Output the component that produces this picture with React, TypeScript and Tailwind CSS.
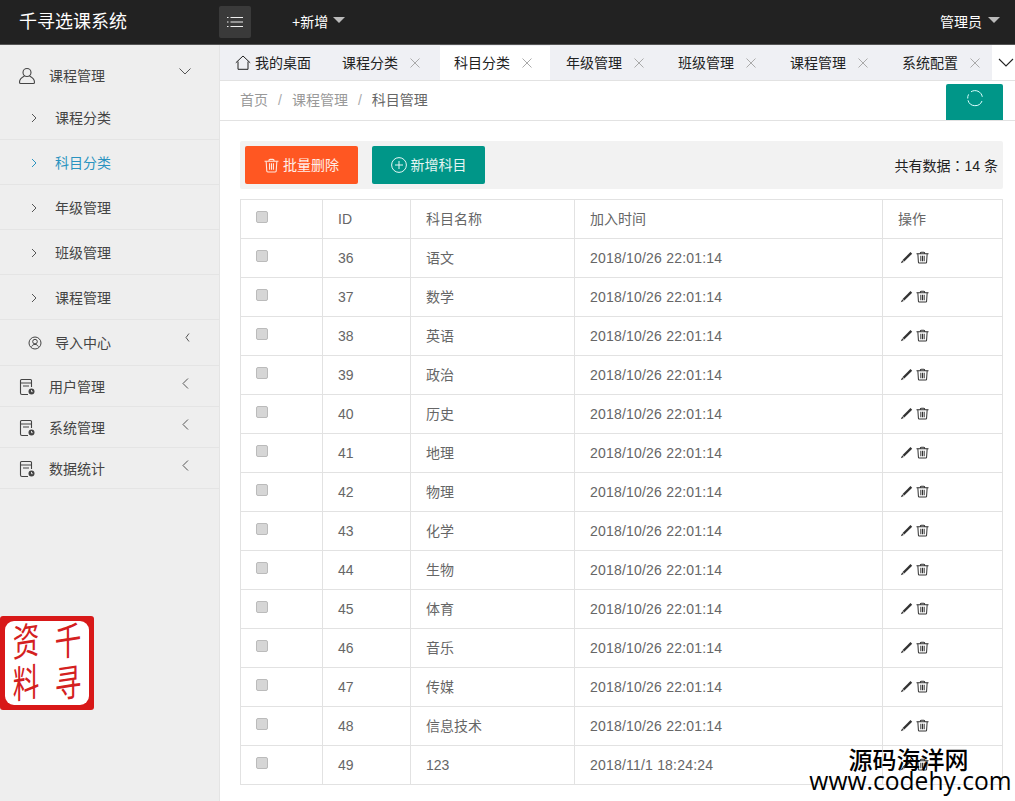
import type { ReactNode } from 'react'

const rows = [
  { id: '36', name: '语文', time: '2018/10/26 22:01:14' },
  { id: '37', name: '数学', time: '2018/10/26 22:01:14' },
  { id: '38', name: '英语', time: '2018/10/26 22:01:14' },
  { id: '39', name: '政治', time: '2018/10/26 22:01:14' },
  { id: '40', name: '历史', time: '2018/10/26 22:01:14' },
  { id: '41', name: '地理', time: '2018/10/26 22:01:14' },
  { id: '42', name: '物理', time: '2018/10/26 22:01:14' },
  { id: '43', name: '化学', time: '2018/10/26 22:01:14' },
  { id: '44', name: '生物', time: '2018/10/26 22:01:14' },
  { id: '45', name: '体育', time: '2018/10/26 22:01:14' },
  { id: '46', name: '音乐', time: '2018/10/26 22:01:14' },
  { id: '47', name: '传媒', time: '2018/10/26 22:01:14' },
  { id: '48', name: '信息技术', time: '2018/10/26 22:01:14' },
  { id: '49', name: '123', time: '2018/11/1 18:24:24' },
]

const subItems = ['课程分类', '科目分类', '年级管理', '班级管理', '课程管理']
const tabs = ['课程分类', '科目分类', '年级管理', '班级管理', '课程管理', '系统配置']

function UserIcon() {
  return (
    <svg width="18" height="18" viewBox="0 0 18 18" fill="none" stroke="#444" strokeWidth="1.1">
      <circle cx="9" cy="5.5" r="4" />
      <path d="M6.5 9C3.5 10.5 1.5 12.5 1.5 15.2c0 .8.4 1.3 1.2 1.3h12.6c.8 0 1.2-.5 1.2-1.3 0-2.7-2-4.7-5-6.2" />
    </svg>
  )
}

function CircleUserIcon() {
  return (
    <svg width="14" height="14" viewBox="0 0 14 14" fill="none" stroke="#444" strokeWidth="1">
      <circle cx="7" cy="7" r="6" />
      <circle cx="7" cy="5.6" r="2.3" />
      <path d="M3.6 10.6c.8-1.6 2-2.2 3.4-2.2s2.6.6 3.4 2.2" />
    </svg>
  )
}

function NoteIcon() {
  return (
    <svg width="17" height="18" viewBox="0 0 17 18" fill="none" stroke="#444" strokeWidth="1.1">
      <path d="M9 16.500H3c-1 0-1.500-.6-1.500-1.500V2.500c0-.6.4-1 1-1h9c.6 0 1 .4 1 1V9" />
      <path d="M1.500 5h11M4 8h6" />
      <circle cx="12.500" cy="13.500" r="3" fill="#444" stroke="none" />
      <path d="M12.500 12v1.700h1.200" stroke="#eee" strokeWidth="0.9" />
    </svg>
  )
}

function ChevronRight({ color = '#555' }: { color?: string }) {
  return (
    <svg width="6" height="10" viewBox="0 0 6 10" fill="none" stroke={color} strokeWidth="1">
      <path d="M1 1l4 4-4 4" />
    </svg>
  )
}

function ChevronLeft({ size = 'sm' }: { size?: 'sm' | 'lg' }) {
  const w = size === 'lg' ? 7 : 5
  const h = size === 'lg' ? 11 : 9
  return (
    <svg width={w} height={h} viewBox={`0 0 ${w} ${h}`} fill="none" stroke="#555" strokeWidth="1">
      <path d={`M${w - 1} .5L1 ${h / 2}l${w - 2} ${h / 2 - 0.5}`} />
    </svg>
  )
}

function CloseIcon() {
  return (
    <svg width="10" height="10" viewBox="0 0 10 10" fill="none" stroke="#aaa" strokeWidth="1">
      <path d="M.5.5l9 9M9.500.5l-9 9" />
    </svg>
  )
}

function TrashOutline({ size, color, width }: { size: number; color: string; width: number }) {
  return (
    <svg width={size} height={size} viewBox="0 0 14 14" fill="none" stroke={color} strokeWidth={width}>
      <path d="M.5 3h13M4.500 3c0-1 .5-1.700 1.200-1.700h2.600c.7 0 1.200.7 1.200 1.700" />
      <path d="M2 3l.6 9.200c0 .5.4.8 1 .8h6.800c.6 0 1-.3 1-.8L12 3" />
      <path d="M5.200 5v6M7 5v6M8.800 5v6" />
    </svg>
  )
}

function PencilIcon() {
  return (
    <svg width="13" height="13" viewBox="0 0 13 13" fill="#333">
      <path d="M10.500 1l1.700 1.700-7.900 7.900-1.700-1.700z" />
      <path d="M2.200 9.300l1.600 1.600-3 1.300z" />
    </svg>
  )
}

function SubRow({ label, active }: { label: string; active: boolean }) {
  return (
    <div className="flex h-[45px] items-center border-b border-[#e4e4e4] pl-[31px] pt-[2px]">
      <ChevronRight color={active ? '#2a93c0' : '#555'} />
      <span className={active ? 'ml-[18px] text-[#2a93c0]' : 'ml-[18px] text-[#444]'}>{label}</span>
    </div>
  )
}

function MainRow({ label }: { label: string }) {
  return (
    <div className="flex h-[41px] items-center border-b border-[#e4e4e4] pl-[19px] pr-[30px] pt-[2px]">
      <NoteIcon />
      <span className="ml-[13px] text-[#444]">{label}</span>
      <span className="ml-auto mb-[8px]">
        <ChevronLeft size="lg" />
      </span>
    </div>
  )
}

function Sidebar() {
  return (
    <aside className="w-[220px] shrink-0 border-r border-[#e4e4e4] bg-[#eeeeee] text-sm">
      <div className="flex h-[50px] items-center pl-[18px] pr-[28px] pt-[11px]">
        <UserIcon />
        <span className="ml-[13px] text-[#444]">课程管理</span>
        <svg className="ml-auto mb-[8px]" width="12" height="7" viewBox="0 0 12 7" fill="none" stroke="#555" strokeWidth="1">
          <path d="M.5.5L6 6l5.500-5.500" />
        </svg>
      </div>
      {subItems.map((label, i) => (
        <SubRow key={i} label={label} active={i === 1} />
      ))}
      <div className="flex h-[46px] items-center border-b border-[#e4e4e4] pl-[28px] pr-[29px]">
        <CircleUserIcon />
        <span className="ml-[13px] text-[#444]">导入中心</span>
        <span className="ml-auto mb-[10px]">
          <ChevronLeft />
        </span>
      </div>
      <MainRow label="用户管理" />
      <MainRow label="系统管理" />
      <MainRow label="数据统计" />
    </aside>
  )
}

function TabBar() {
  return (
    <div className="flex h-[36px] items-end border-b border-[#e2e2e2] bg-[#eff0f4] text-sm text-[#222]">
      <div className="flex min-w-0 flex-1 items-end overflow-hidden">
        <div className="flex h-[34px] w-[108px] shrink-0 items-center pl-[15px]">
          <svg width="16" height="16" viewBox="0 0 16 16" fill="none" stroke="#222" strokeWidth="1">
            <path d="M.8 7.800L8 1l7.200 6.800M3 6.500v7.800h10V6.500" />
          </svg>
          <span className="ml-[4px]">我的桌面</span>
        </div>
        {tabs.map((t, i) => (
          <div
            key={t}
            className={
              i === 1
                ? 'flex h-[34px] w-[110px] mr-[2px] shrink-0 items-center bg-white pl-[14px]'
                : 'flex h-[34px] w-[110px] mr-[2px] shrink-0 items-center pl-[14px]'
            }
          >
            <span>{t}</span>
            <span className="ml-[12px]">
              <CloseIcon />
            </span>
          </div>
        ))}
      </div>
      <div className="flex h-[35px] w-[23px] shrink-0 items-center justify-center bg-white">
        <svg className="ml-[5px]" width="16" height="9" viewBox="0 0 16 9" fill="none" stroke="#222" strokeWidth="1.100">
          <path d="M1 1l7 7 7-7" />
        </svg>
      </div>
    </div>
  )
}

function ToolButton({ color, icon, label }: { color: string; icon: ReactNode; label: string }) {
  return (
    <button className={`flex h-[38px] w-[113px] items-center justify-center gap-[4px] rounded-[2px] text-sm text-white/90 ${color}`}>
      {icon}
      {label}
    </button>
  )
}

function Cell({ children }: { children: ReactNode }) {
  return <td className="h-[39px] border border-[#e2e2e2] px-[15px] align-middle text-sm text-[#666]">{children}</td>
}

function Check() {
  return (
    <input
      type="checkbox"
      className="mb-[4px] block h-[12px] w-[12px] appearance-none rounded-[2px] border border-[#bbbbbb] bg-[#d6d6d6]"
    />
  )
}

function Seal() {
  return (
    <div className="absolute left-0 top-[616px] h-[94px] w-[94px] rounded-[3px] bg-[#d81818] p-[5px]">
      <div className="grid h-full w-full grid-cols-2 grid-rows-2 place-items-center rounded-[9px] bg-white text-[38px] leading-none text-[#d42020]">
        <span className="scale-x-[0.7] -skew-y-6">资</span>
        <span className="scale-x-[0.7] -skew-y-6">千</span>
        <span className="scale-x-[0.7] -skew-y-6">料</span>
        <span className="scale-x-[0.7] -skew-y-6">寻</span>
      </div>
    </div>
  )
}

export default function App() {
  return (
    <div className="relative flex h-[801px] w-[1015px] flex-col overflow-hidden bg-white font-['Liberation_Sans','Noto_Sans_CJK_SC',sans-serif]">
      <header className="flex h-[45px] shrink-0 items-center border-b border-[#555] bg-[#222222] text-white">
        <div className="w-[219px] pl-[19px] text-lg">千寻选课系统</div>
        <div className="flex h-[32px] w-[32px] items-center justify-center rounded-[2px] bg-[#3a3a3a]">
          <svg width="16" height="12" viewBox="0 0 16 12" fill="none" stroke="#eee" strokeWidth="1">
            <path d="M3.500 1.500H16M3.500 6H16M3.500 10.500H16" />
            <path d="M0 1.500h1.500M0 6h1.500M0 10.500h1.500" />
          </svg>
        </div>
        <div className="ml-[41px] text-sm">+新增</div>
        <div className="ml-[5px] mb-[4px] h-0 w-0 border-x-[6px] border-t-[6px] border-x-transparent border-t-[#bbbbbb]" />
        <div className="ml-auto text-sm">管理员</div>
        <div className="ml-[6px] mr-[15px] mb-[4px] h-0 w-0 border-x-[6px] border-t-[6px] border-x-transparent border-t-[#bbbbbb]" />
      </header>

      <div className="flex min-h-0 flex-1">
        <Sidebar />
        <main className="min-w-0 flex-1">
          <TabBar />
          <div className="flex h-[40px] items-end border-b border-[#e2e2e2] pl-[20px] pr-[12px] text-sm text-[#999]">
            <div className="mb-[1px] flex h-[38px] items-center">
              <span>首页</span>
              <span className="mx-[10px] text-[#aaa]">/</span>
              <span>课程管理</span>
              <span className="mx-[10px] text-[#aaa]">/</span>
              <span className="text-[#666]">科目管理</span>
            </div>
            <div className="ml-auto flex h-[36px] w-[57px] items-center justify-center rounded-t-[2px] bg-[#009688]">
              <svg className="mb-[8px]" width="18" height="18" viewBox="0 0 18 18" fill="none" stroke="#dff" strokeWidth="1">
                <path d="M5 2.800A7.400 7.400 0 0 1 16.300 7.800M16 12A7.400 7.400 0 0 1 2 11.300M1.700 9.500A7.400 7.400 0 0 1 2.600 5.400" />
              </svg>
            </div>
          </div>

          <div className="pl-[20px] pr-[12px] pt-[20px]">
            <div className="flex h-[48px] items-center rounded-[2px] bg-[#f2f2f2] px-[5px]">
              <ToolButton color="bg-[#ff5722]" icon={<TrashOutline size={15} color="#ffe9e0" width={1} />} label="批量删除" />
              <div className="w-[14px]" />
              <ToolButton
                color="bg-[#009688]"
                icon={
                  <svg width="16" height="16" viewBox="0 0 16 16" fill="none" stroke="#e6f7f5" strokeWidth="1">
                    <circle cx="8" cy="8" r="7.400" />
                    <path d="M4 8h8M8 4v8" />
                  </svg>
                }
                label="新增科目"
              />
              <div className="ml-auto text-sm text-[#222]">
                共有数据<span className="font-['Noto_Sans_CJK_TC',sans-serif]">：</span>14 条
              </div>
            </div>

            <table className="mt-[10px] w-[762px] table-fixed border-collapse">
              <colgroup>
                <col className="w-[82px]" />
                <col className="w-[88px]" />
                <col className="w-[164px]" />
                <col className="w-[308px]" />
                <col className="w-[120px]" />
              </colgroup>
              <thead>
                <tr>
                  <Cell>
                    <Check />
                  </Cell>
                  <Cell>ID</Cell>
                  <Cell>科目名称</Cell>
                  <Cell>加入时间</Cell>
                  <Cell>操作</Cell>
                </tr>
              </thead>
              <tbody>
                {rows.map((r) => (
                  <tr key={r.id}>
                    <Cell>
                      <Check />
                    </Cell>
                    <Cell>{r.id}</Cell>
                    <Cell>{r.name}</Cell>
                    <Cell>
                      <span className="tracking-[0.2px]">{r.time}</span>
                    </Cell>
                    <Cell>
                      <div className="mb-[1px] ml-[2px] flex items-center gap-[3px]">
                        <PencilIcon />
                        <TrashOutline size={13} color="#333" width={1.1} />
                      </div>
                    </Cell>
                  </tr>
                ))}
              </tbody>
            </table>
          </div>
        </main>
      </div>

      <Seal />

      <div className="absolute right-[4px] top-[746px] flex w-[201px] flex-col items-center text-black">
        <span className="mr-[4px] text-[24px] font-medium leading-[29px]">源码海洋网</span>
        <span className="-mt-[6px] whitespace-nowrap font-['Open_Sans',sans-serif] text-[24.6px] leading-[24px]">www.codehy.com</span>
      </div>
    </div>
  )
}
